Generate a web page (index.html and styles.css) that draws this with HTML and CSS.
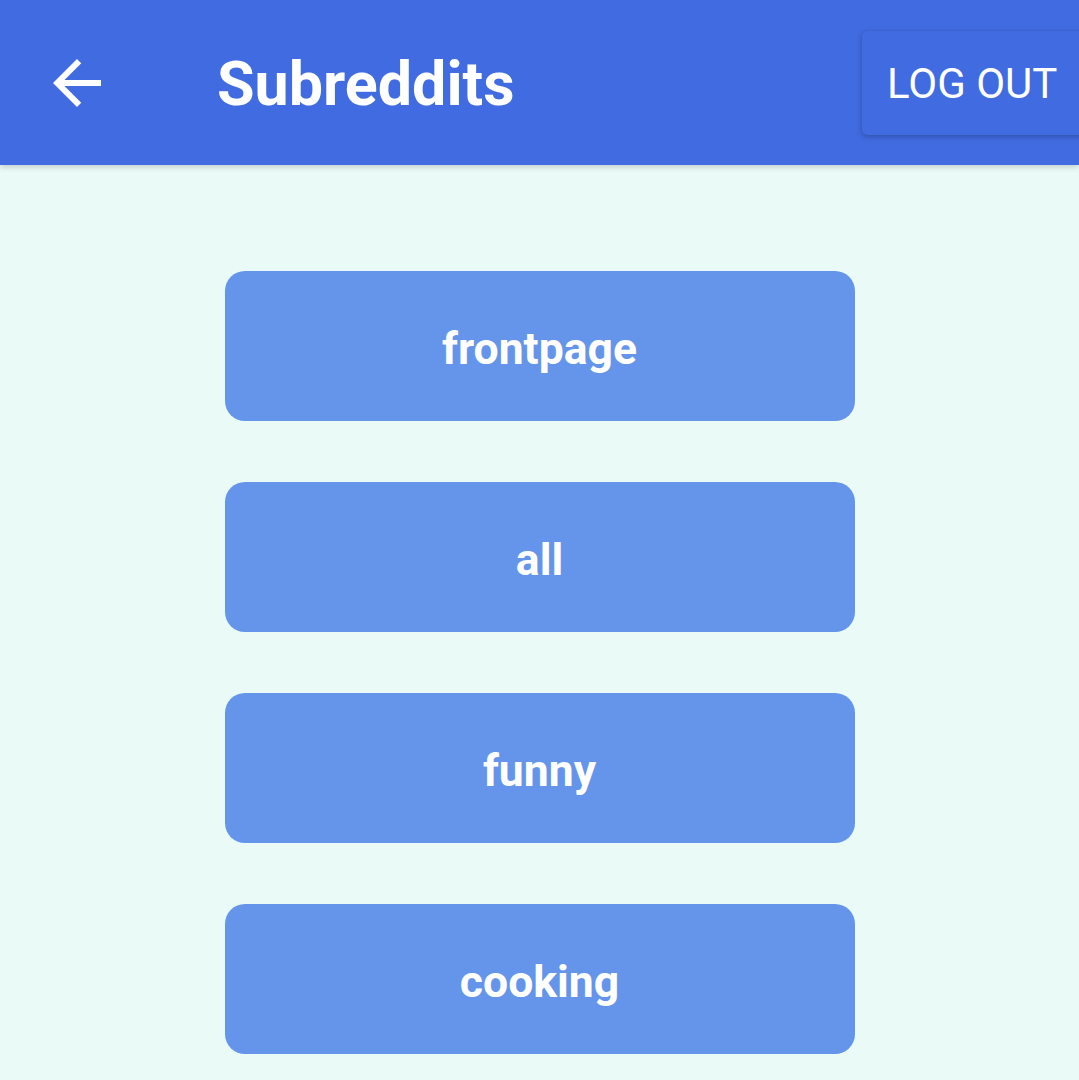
FILE: index.html
```html
<!DOCTYPE html>
<html>
<head>
<meta charset="utf-8">
<link rel="stylesheet" href="styles.css">
</head>
<body>
<header class="appbar">
  <div class="back">
    <svg viewBox="0 0 24 24" width="72" height="72"><path fill="#fff" d="M20 11H7.83l5.59-5.59L12 4l-8 8 8 8 1.41-1.41L7.83 13H20v-2z"/></svg>
  </div>
  <h1 class="title">Subreddits</h1>
  <div class="spacer"></div>
  <button class="logout">LOG OUT</button>
</header>
<main class="list">
  <button class="sub">frontpage</button>
  <button class="sub">all</button>
  <button class="sub">funny</button>
  <button class="sub">cooking</button>
</main>
</body>
</html>
```
FILE: styles.css
```css
html, body {
  margin: 0;
  padding: 0;
}
body {
  width: 1079px;
  height: 1080px;
  overflow: hidden;
  background: #eafaf6;
  font-family: Roboto, "Noto Sans", sans-serif;
}
.appbar {
  height: 165px;
  background: #416be1;
  display: flex;
  align-items: center;
  box-shadow: 0 2px 6px rgba(0,0,0,0.18);
  position: relative;
  z-index: 1;
  overflow: hidden;
}
.back {
  width: 72px;
  height: 72px;
  margin-left: 41px;
  display: flex;
}
.title {
  margin: 4px 0 0 104px;
  color: #fff;
  font-weight: 700;
  font-size: 61px;
  letter-spacing: 0;
  line-height: 1;
}
.spacer {
  flex: 1;
}
.logout {
  flex: none;
  width: 226px;
  height: 104px;
  margin-right: -9px;
  border: none;
  border-radius: 5px;
  background: #416be1;
  color: #fff;
  font-family: Roboto, sans-serif;
  font-size: 42px;
  font-weight: 400;
  text-align: left;
  padding: 2px 0 0 25px;
  box-shadow: 0 2px 6px rgba(0,0,0,0.22), 0 0 2px rgba(0,0,0,0.1);
}
.list {
  display: flex;
  flex-direction: column;
  align-items: center;
  gap: 61px;
  padding-top: 106px;
}
.sub {
  width: 630px;
  height: 150px;
  border: none;
  border-radius: 20px;
  background: #6495ea;
  color: #fff;
  font-family: Roboto, sans-serif;
  font-weight: 700;
  font-size: 44.5px;
  padding: 6px 0 0;
}
```
